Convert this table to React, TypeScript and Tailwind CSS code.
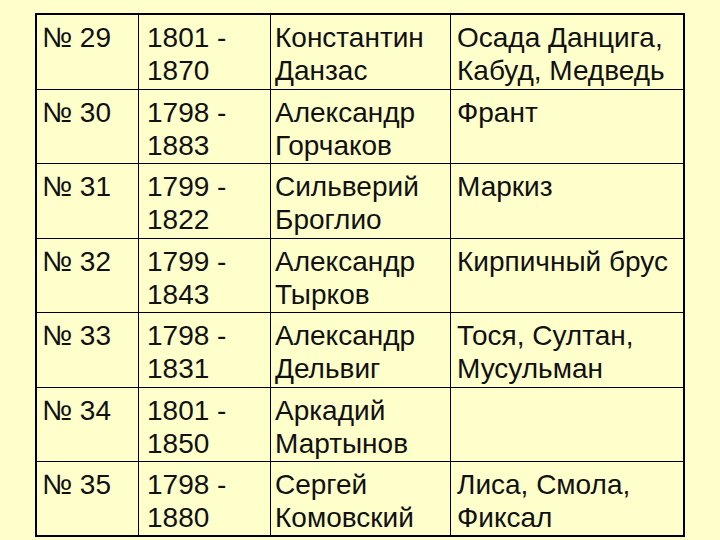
const rows = [
  { n: "№ 29", y: ["1801 -", "1870"], name: ["Константин", "Данзас"], nick: ["Осада Данцига,", "Кабуд, Медведь"], h: "h-[74px]" },
  { n: "№ 30", y: ["1798 -", "1883"], name: ["Александр", "Горчаков"], nick: ["Франт"], h: "h-[74px] border-t" },
  { n: "№ 31", y: ["1799 -", "1822"], name: ["Сильверий", "Броглио"], nick: ["Маркиз"], h: "h-[75px] border-t" },
  { n: "№ 32", y: ["1799 -", "1843"], name: ["Александр", "Тырков"], nick: ["Кирпичный брус"], h: "h-[74px] border-t" },
  { n: "№ 33", y: ["1798 -", "1831"], name: ["Александр", "Дельвиг"], nick: ["Тося, Султан,", "Мусульман"], h: "h-[75px] border-t" },
  { n: "№ 34", y: ["1801 -", "1850"], name: ["Аркадий", "Мартынов"], nick: [], h: "h-[74px] border-t" },
  { n: "№ 35", y: ["1798 -", "1880"], name: ["Сергей", "Комовский"], nick: ["Лиса, Смола,", "Фиксал"], h: "h-[74px] border-t" },
]

function Lines({ lines }: { lines: string[] }) {
  return (
    <>
      {lines.map((l, i) => (
        <div key={i} className="whitespace-nowrap">
          {l}
        </div>
      ))}
    </>
  )
}

export default function App() {
  return (
    <div className="h-[540px] w-[720px] overflow-hidden bg-[#ffffcc] pt-[13px] pl-[35px] font-['Liberation_Sans',Arial,sans-serif] text-[28px] leading-[33px] text-[#111]">
      <div className="flex w-[650px] flex-col border-2 border-black">
        {rows.map((r) => (
          <div key={r.n} className={`flex border-black ${r.h}`}>
            <div className="w-[101px] pt-[6px] pl-[5px]">{r.n}</div>
            <div className="w-[132px] border-l border-black pt-[6px] pl-[8px]">
              <Lines lines={r.y} />
            </div>
            <div className="w-[180px] border-l border-black pt-[6px] pl-[4px]">
              <Lines lines={r.name} />
            </div>
            <div className="w-[233px] border-l border-black pt-[6px] pl-[6px]">
              <Lines lines={r.nick} />
            </div>
          </div>
        ))}
      </div>
    </div>
  )
}
